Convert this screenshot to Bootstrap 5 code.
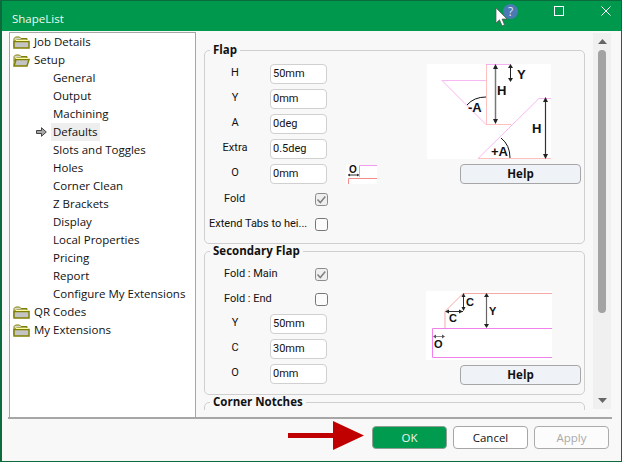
<!DOCTYPE html>
<html lang="en">
<head>
<meta charset="utf-8">
<title>ShapeList</title>
<link rel="stylesheet" href="https://cdn.jsdelivr.net/npm/bootstrap@5.3.0/dist/css/bootstrap.min.css">
<style>
html,body{height:100%;overflow:hidden}
body{font-family:"Open Sans","Noto Sans","Liberation Sans",sans-serif;font-size:11.5px;line-height:16px;color:#111;background:#f8f8f8}
.win{width:622px;height:462px;border:1px solid #0b6b3c;border-left-width:2px;display:flex;flex-direction:column;position:relative;background:#f8f8f8}
.ttl{height:30px;flex:none;background:#00984c;color:#eef8f2;display:flex;align-items:center;padding-left:10px;padding-top:5px}
.wctl{position:absolute;display:block}
.hlpdot{left:501px;top:3px;width:15px;height:15px;border-radius:50%;background:#4a79b4;color:#dfe8f4;text-align:center;line-height:15px;font-size:12px}
.maxb{left:552px;top:5px;width:10px;height:10px;border:1px solid #fff}
.closeb{left:599px;top:5px;width:10px;height:10px}
.cursor{left:493px;top:6px;width:14px;height:20px}
.mainr{height:388px;flex:none;display:flex;border-bottom:2px solid #a6a6a6;margin-left:6px;margin-right:9px}
.treep{width:187px;flex:none;background:#fff;border:1px solid #a6a6a6;border-bottom:0;margin-top:1px;margin-left:1px}
.treel{list-style:none;margin:0;padding:0}
.treel li{height:18px;display:flex;align-items:center;white-space:nowrap;position:relative}
.toprow{padding-left:3px;gap:4px}
.kidrow{padding-left:43px}
.seln{background:#eee;margin-left:-2px;padding:1px 2px}
.defarrow{position:absolute;left:26px;top:4px}
.panelp{flex:1;display:flex;min-width:0;overflow:hidden}
.scrollc{flex:1;min-width:0;height:379px;padding:12px 8px 0 8px;overflow:hidden}
.gbox{border:1px solid #cfcfcf;border-radius:5px;padding:7px 2px 4px 0;margin:0;min-width:0}
.gbox2{padding-top:6px;padding-bottom:5px}
.gbox legend{float:none;width:auto;font-size:11.5px;line-height:14px;font-weight:700;margin:0 0 0 5px;padding:0 3px;color:#111}
.nothgt{min-height:60px}
.leftc{flex:none}
.frow{height:20px;margin-bottom:5px;display:flex;align-items:center;font-family:Roboto,"Liberation Sans",sans-serif;font-size:11px}
.lbl{width:60px;text-align:center;flex:none;padding-bottom:2px}
.mm{width:57px;height:20px;min-height:20px;padding:0 2px 1px;font-size:11px;line-height:16px;border:1px solid #d0d0d0;border-radius:4px;color:#111;margin-left:5px;font-family:inherit}
.chkl{flex:none;width:110px;white-space:nowrap}
.in19{padding-left:19px}
.in4{padding-left:4px}
.ck{width:13px;height:13px;margin:0;border:1px solid #777;border-radius:2px;background-color:#fbfbfb}
.ck:checked{background-color:#efefef;border-color:#8c8c8c;background-image:url("data:image/svg+xml,%3csvg xmlns='http://www.w3.org/2000/svg' viewBox='0 0 13 13'%3e%3cpath fill='none' stroke='%23808080' stroke-width='1.5' d='M2.5 6.5l2.8 3 5-6'/%3e%3c/svg%3e");background-size:13px 13px}
.thumbo{margin-left:19px;display:block}
.rightc{width:154px;flex:none;display:flex;flex-direction:column}
.rightc2{width:155px;padding-top:27px}
.pic{display:block;background:#fff}
.helpb{align-self:flex-end;width:121px;height:20px;padding:0;margin-top:5px;font-size:11.5px;line-height:18px;font-weight:700;background:#eff3f8;border:1px solid #a6a6a6;border-radius:4px;color:#111}
.diag{font-family:"Liberation Sans",sans-serif;font-weight:700;fill:#111}
.sbar{width:18px;flex:none;background:#f0f0f0;margin:2px 1px 8px 0;position:relative;display:flex;flex-direction:column;align-items:center;justify-content:space-between;padding:6px 0}
.sthumb{position:absolute;left:5px;top:17px;width:8px;height:263px;border-radius:4px;background:#a3a3a3}
.footr{flex:1;display:flex;justify-content:flex-end;gap:6px;padding:7px 12px 0 0;position:relative}
.dbtn{width:75px;height:23px;padding:0;font-size:11.5px;line-height:20px;border-radius:4px;border:1px solid #a6a6a6;background:#fff;color:#111}
.dbtn.okb{background:#009b4e;color:#eaf7f0;border-color:#8f9f96}
.dbtn.applyb{background:#fcfcfc;color:#a9a9a9;opacity:1;border-color:#ababab}
.redarr{position:absolute;left:285px;top:1px}
</style>
</head>
<body>
<div class="win">
  <div class="ttl">ShapeList</div>
  <span class="wctl hlpdot">?</span>
  <svg class="wctl cursor" viewBox="0 0 14 20"><path d="M1 1v15l3.5-3.2 2.6 6 2.4-1-2.5-5.8H12z" fill="#fff" stroke="#555" stroke-width=".7"/></svg>
  <span class="wctl maxb"></span>
  <svg class="wctl closeb" viewBox="0 0 10 10"><path d="M.5.5l9 9M9.500.5l-9 9" stroke="#fff" stroke-width="1"/></svg>

  <div class="mainr">
    <div class="treep">
      <ul class="treel">
        <li class="toprow"><svg width="17" height="13" viewBox="0 0 17 13"><path d="M1 11V2.500L2.500 1h4L8 2.500h6V4H3.500L1 7" fill="#d8d8c8" stroke="#808000"/><path d="M1 12V5.500h15V12z" fill="#c4c4c4" stroke="#808000" stroke-width="1.500"/><path d="M3 4.500h12" stroke="#ffff9a"/></svg><span>Job Details</span></li>
        <li class="toprow"><svg width="17" height="13" viewBox="0 0 17 13"><path d="M1 11V2.500L2.500 1h4L8 2.500h6V4H3.500L1 7" fill="#d8d8c8" stroke="#808000"/><path d="M1 12l2-6.500h13L14 12z" fill="#c4c4c4" stroke="#808000" stroke-width="1.500"/><path d="M3 4.500h12" stroke="#ffff9a"/></svg><span>Setup</span></li>
        <li class="kidrow">General</li>
        <li class="kidrow">Output</li>
        <li class="kidrow">Machining</li>
        <li class="kidrow"><svg class="defarrow" width="11" height="10" viewBox="0 0 11 10"><path d="M.5 3.500h5V.7L10.300 5 5.500 9.300V6.500h-5z" fill="#a8a8a8" stroke="#333" stroke-width=".9"/></svg><span class="seln">Defaults</span></li>
        <li class="kidrow">Slots and Toggles</li>
        <li class="kidrow">Holes</li>
        <li class="kidrow">Corner Clean</li>
        <li class="kidrow">Z Brackets</li>
        <li class="kidrow">Display</li>
        <li class="kidrow">Local Properties</li>
        <li class="kidrow">Pricing</li>
        <li class="kidrow">Report</li>
        <li class="kidrow">Configure My Extensions</li>
        <li class="toprow"><svg width="17" height="13" viewBox="0 0 17 13"><path d="M1 11V2.500L2.500 1h4L8 2.500h6V4H3.500L1 7" fill="#d8d8c8" stroke="#808000"/><path d="M1 12V5.500h15V12z" fill="#c4c4c4" stroke="#808000" stroke-width="1.500"/><path d="M3 4.500h12" stroke="#ffff9a"/></svg><span>QR Codes</span></li>
        <li class="toprow"><svg width="17" height="13" viewBox="0 0 17 13"><path d="M1 11V2.500L2.500 1h4L8 2.500h6V4H3.500L1 7" fill="#d8d8c8" stroke="#808000"/><path d="M1 12V5.500h15V12z" fill="#c4c4c4" stroke="#808000" stroke-width="1.500"/><path d="M3 4.500h12" stroke="#ffff9a"/></svg><span>My Extensions</span></li>
      </ul>
    </div>
    <div class="panelp">
      <div class="scrollc">
        <fieldset class="gbox">
          <legend>Flap</legend>
          <div class="d-flex">
            <div class="leftc" style="width:222px">
              <div class="frow"><span class="lbl">H</span><input class="form-control mm" value="50mm"></div>
              <div class="frow"><span class="lbl">Y</span><input class="form-control mm" value="0mm"></div>
              <div class="frow"><span class="lbl">A</span><input class="form-control mm" value="0deg"></div>
              <div class="frow"><span class="lbl">Extra</span><input class="form-control mm" value="0.5deg"></div>
              <div class="frow"><span class="lbl">O</span><input class="form-control mm" value="0mm">
                <svg class="thumbo pic" width="31" height="19" viewBox="0 0 31 19"><path d="M13.500 12V.5H31" fill="none" stroke="#f29af0"/><path d="M2.500 19V13.500H31" fill="none" stroke="#f58a8a"/><path d="M2 10h11" stroke="#333"/><path d="M2 10l2-1.500v3zM13 10l-2-1.500v3z" fill="#333"/><text class="diag" x="3" y="8" font-size="10">O</text></svg>
              </div>
              <div class="frow"><span class="chkl in19">Fold</span><input class="form-check-input ck" type="checkbox" checked></div>
              <div class="frow"><span class="chkl in4">Extend Tabs to hei...</span><input class="form-check-input ck" type="checkbox"></div>
            </div>
            <div class="rightc">
              <svg class="pic" width="124" height="95" viewBox="0 0 124 95">
                <path d="M59 .5h25M59.500 0v60M59 60.500h25" fill="none" stroke="#ffc0c0" stroke-width="1"/>
                <path d="M59 .5h25" stroke="#f4b0f0"/>
                <path d="M15 16.500h44M15 16.500l44 44" fill="none" stroke="#f8b8f4"/>
                <path d="M68.500 2v56" stroke="#777" stroke-width="1.500"/><path d="M68.500 0l-2.500 5h5zM68.500 60l-2.500-5h5z" fill="#222"/>
                <path d="M83.500 2v14" stroke="#222"/><path d="M83.500 0l-2.500 4h5zM83.500 18l-2.500-4h5z" fill="#222"/>
                <text class="diag" x="90" y="15" font-size="13">Y</text>
                <text class="diag" x="70" y="31" font-size="13">H</text>
                <text class="diag" x="41" y="48" font-size="13">-A</text>
                <path d="M40 41q7-8 19-8" fill="none" stroke="#111"/>
                <path d="M112 34.500h12M51 94.500L112 34.500M51 94.500h73" fill="none" stroke="#f8b8f4"/>
                <path d="M51 94.500h73" stroke="#ffc0c0"/>
                <path d="M118.500 36v56" stroke="#333" stroke-width="1.200"/><path d="M118.500 33l-2.500 5h5zM118.500 95l-2.500-5h5z" fill="#222"/>
                <text class="diag" x="105" y="69" font-size="13">H</text>
                <text class="diag" x="64" y="92" font-size="13">+A</text>
                <path d="M74 74q9 7 9 20" fill="none" stroke="#111"/>
              </svg>
              <button type="button" class="btn helpb">Help</button>
            </div>
          </div>
        </fieldset>
        <fieldset class="gbox gbox2">
          <legend>Secondary Flap</legend>
          <div class="d-flex">
            <div class="leftc" style="width:221px">
              <div class="frow"><span class="chkl in19">Fold : Main</span><input class="form-check-input ck" type="checkbox" checked></div>
              <div class="frow"><span class="chkl in19">Fold : End</span><input class="form-check-input ck" type="checkbox"></div>
              <div class="frow"><span class="lbl">Y</span><input class="form-control mm" value="50mm"></div>
              <div class="frow"><span class="lbl">C</span><input class="form-control mm" value="30mm"></div>
              <div class="frow"><span class="lbl">O</span><input class="form-control mm" value="0mm"></div>
            </div>
            <div class="rightc rightc2">
              <svg class="pic" width="126" height="69" viewBox="0 0 126 69">
                <path d="M37 2.500h89M37 2.500L19 20.500V37" fill="none" stroke="#f5a8a8"/>
                <path d="M126 37.500H6.500v29H126" fill="none" stroke="#ef80ec" stroke-width="1"/>
                <path d="M37.500 4v15" stroke="#333"/><path d="M37.500 2l-2 4h4zM37.500 20l-2-4h4z" fill="#222"/>
                <path d="M20 20.500h17" stroke="#333"/><path d="M19 20.500l4-2v4zM37 20.500l-4-2v4z" fill="#222"/>
                <path d="M60.500 4v32" stroke="#666" stroke-width="1.200"/><path d="M60.500 2l-2.500 4h5zM60.500 37l-2.500-4h5z" fill="#222"/>
                <path d="M8 45.500h10" stroke="#888"/><path d="M7 45.500l3-2v4zM19 45.500l-3-2v4z" fill="#555"/>
                <text class="diag" x="40" y="15" font-size="11">C</text>
                <text class="diag" x="23" y="31" font-size="11">C</text>
                <text class="diag" x="63" y="24" font-size="11">Y</text>
                <text class="diag" x="8" y="57" font-size="11">O</text>
              </svg>
              <button type="button" class="btn helpb">Help</button>
            </div>
          </div>
        </fieldset>
        <fieldset class="gbox nothgt">
          <legend>Corner Notches</legend>
        </fieldset>
      </div>
      <div class="sbar">
        <svg width="9" height="5" viewBox="0 0 9 5"><path d="M4.500 0L9 5H0z" fill="#666"/></svg>
        <span class="sthumb"></span>
        <svg width="9" height="5" viewBox="0 0 9 5"><path d="M4.500 5L9 0H0z" fill="#666"/></svg>
      </div>
    </div>
  </div>

  <div class="footr">
    <svg class="redarr" width="80" height="32" viewBox="0 0 80 32"><path d="M1 13h45V1l31 14.500L46 30V18H1z" fill="#c00000"/></svg>
    <button type="button" class="btn dbtn okb">OK</button>
    <button type="button" class="btn dbtn">Cancel</button>
    <button type="button" class="btn dbtn applyb" disabled>Apply</button>
  </div>
</div>
<script src="https://cdn.jsdelivr.net/npm/bootstrap@5.3.0/dist/js/bootstrap.bundle.min.js"></script>
</body>
</html>
